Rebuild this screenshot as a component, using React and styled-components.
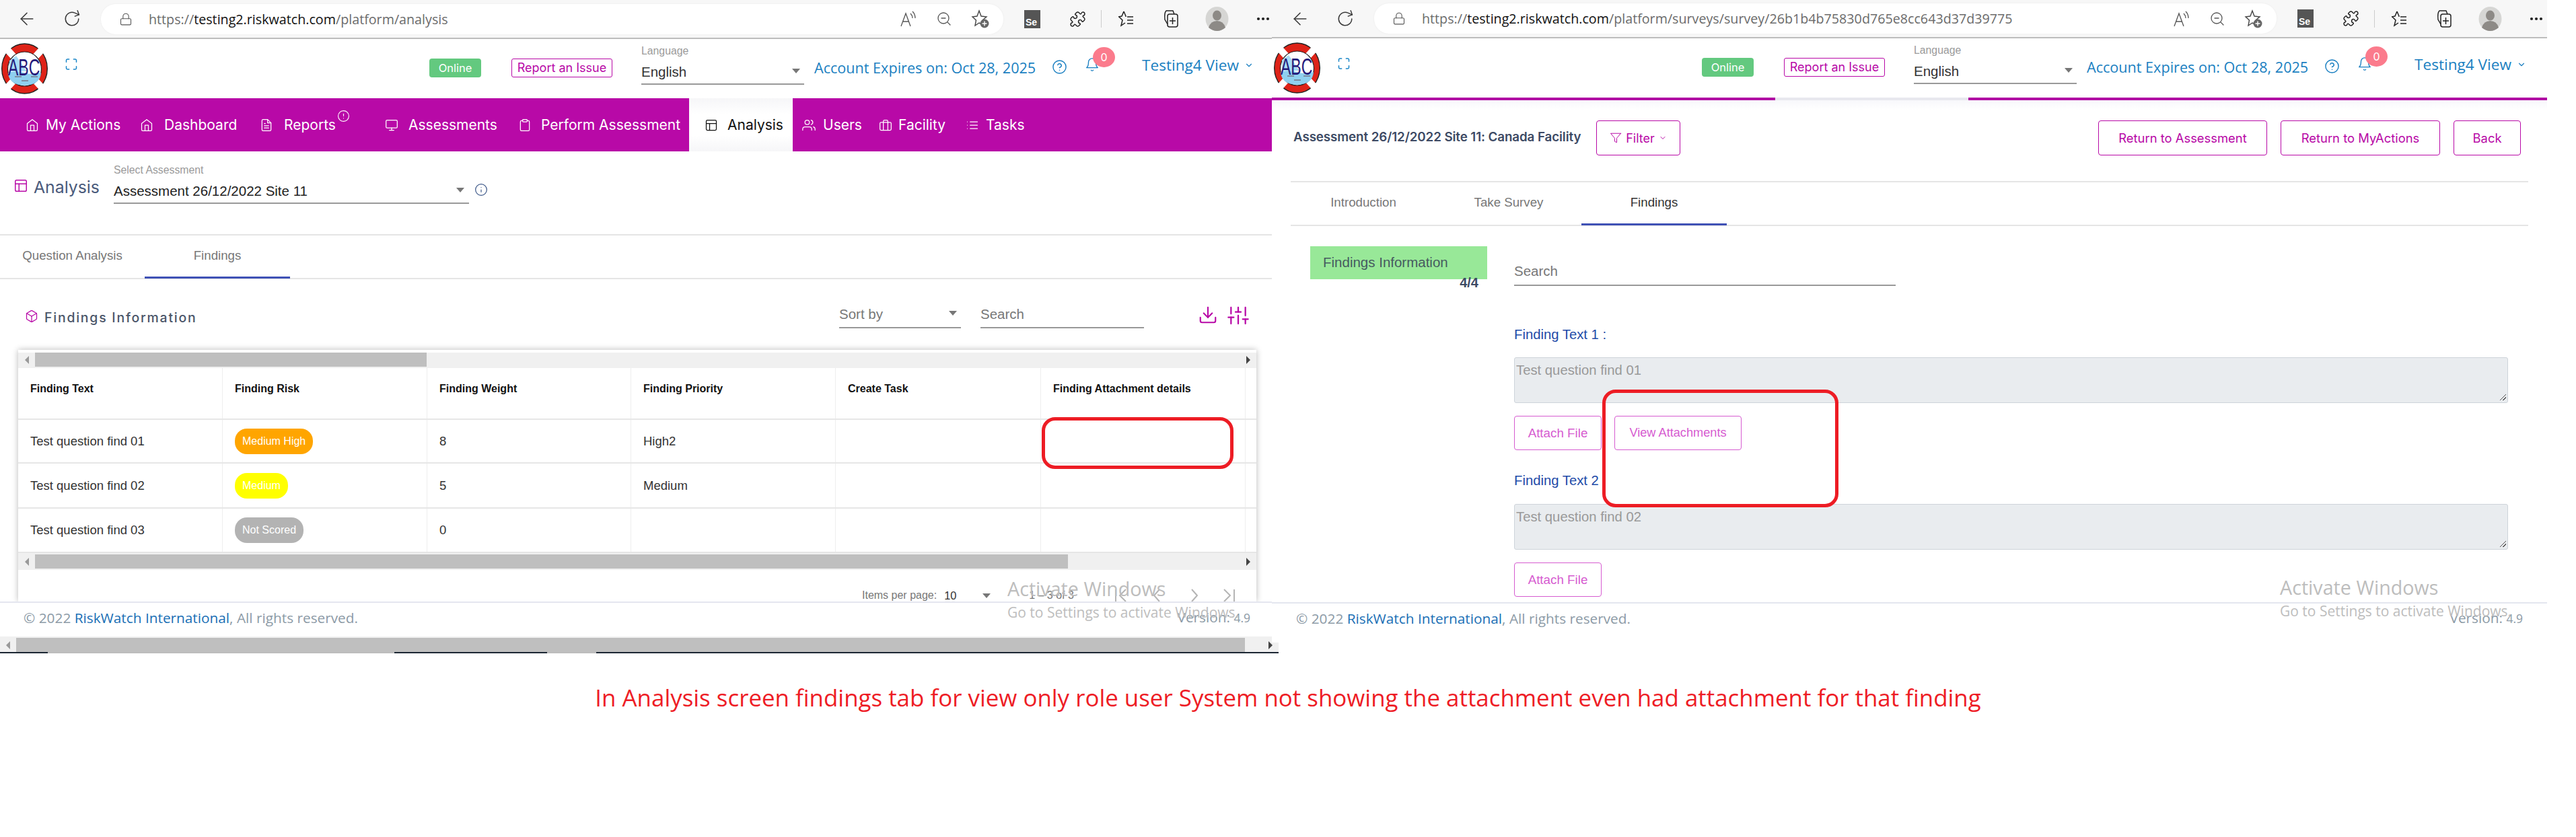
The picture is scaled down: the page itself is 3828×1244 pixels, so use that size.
import React from "react";
import styled, { createGlobalStyle } from "styled-components";
import {
  FiHome, FiFileText, FiMonitor, FiClipboard, FiLayout, FiUsers, FiBriefcase, FiList, FiBox, FiFilter,
  FiChevronDown, FiDownload, FiSliders, FiBell, FiHelpCircle, FiInfo, FiMaximize, FiAlertCircle,
  FiArrowLeft, FiRotateCw, FiLock, FiZoomOut, FiMoreHorizontal,
} from "react-icons/fi";
import { Puzzle } from "lucide-react";

const Global = createGlobalStyle`
  html, body { margin: 0; padding: 0; background: #fff; }
  body { font-family: "Inter", "Liberation Sans", sans-serif; overflow: hidden; }
  * { box-sizing: border-box; }
`;

const MAGENTA = "#b809a7";
const SANS = `"Liberation Sans", Arial, sans-serif`;
const OPEN = `"Open Sans", "Liberation Sans", sans-serif`;

const Page = styled.div`
  width: 3828px;
  height: 1244px;
  display: flex;
  flex-direction: column;
  overflow: hidden;
  background: #fff;
`;
const Panels = styled.div`
  display: flex;
  height: 1010px;
`;
const Panel = styled.div`
  position: relative;
  flex: none;
  width: ${(p) => p.$w}px;
  display: flex;
  flex-direction: column;
`;
const Caption = styled.div`
  height: 54px;
  line-height: 54px;
  text-align: center;
  font-family: ${OPEN};
  font-size: 34.9px;
  color: #ee1c25;
  white-space: nowrap;
`;

/* browser chrome */
const Bar = styled.div`
  flex: none;
  height: ${(p) => p.$h + 2}px;
  background: #f7f7f7;
  border-bottom: 2px solid #bdbdbd;
  display: flex;
  align-items: center;
  padding-left: ${(p) => p.$pad}px;
  color: #333;
`;
const BarIcon = styled.span`
  flex: none;
  display: flex;
  align-items: center;
  justify-content: center;
  width: ${(p) => p.$w}px;
  margin-left: ${(p) => p.$ml || 0}px;
  color: ${(p) => p.$c || "#3a3a3a"};
`;
const Pill = styled.div`
  flex: none;
  margin-left: 28px;
  width: 1341px;
  height: 45px;
  border-radius: 22px;
  background: #fff;
  display: flex;
  align-items: center;
  padding-left: 27px;
  box-shadow: 0 0 3px rgba(0, 0, 0, 0.05);
`;
const Url = styled.div`
  flex: none;
  font-family: ${OPEN};
  font-size: 19.7px;
  color: #6b6b6b;
  width: 1115px;
  margin-left: 24px;
  white-space: nowrap;
  b { font-weight: 400; color: #111; }
`;
const Se = styled.div`
  flex: none;
  margin-left: 31px;
  width: 24px;
  height: 27px;
  background: #555;
  color: #fff;
  font: 700 14px/1 ${SANS};
  padding: 11px 0 0 2px;
`;
const Sep = styled.div`
  flex: none;
  width: 1px;
  height: 26px;
  background: #ccc;
  margin-left: 22px;
`;

const ReadAloud = () => (
  <svg width="26" height="26" viewBox="0 0 26 26" fill="none" stroke="#555" strokeWidth="1.3">
    <path d="M3 24 L10 5 L17 24 M5.500 17 H14.500" />
    <path d="M17 5 Q20 8 20 12 M20 2 Q24 6 24 12" />
  </svg>
);
const StarPlus = () => (
  <svg width="30" height="30" viewBox="0 0 30 30" fill="none" stroke="#444" strokeWidth="1.4">
    <path d="M13 3 L16 11 L24 12 L18 17 L19 24 L13 21 L7 25 L8.500 17 L3 12 L10 11 Z" />
    <circle cx="21" cy="22" r="6.500" fill="#666" stroke="none" />
    <path d="M21 18.500 V25.500 M17.500 22 H24.500" stroke="#fff" />
  </svg>
);
const FavLines = () => (
  <svg width="28" height="28" viewBox="0 0 28 28" fill="none" stroke="#222" strokeWidth="1.5">
    <path d="M11 3 L14 10 L13 10 M4 11 L9 16 L7 24 L13 20" />
    <path d="M11 3 L8 10 L3 11" />
    <path d="M16 11 H25 M16 16 H25 M16 21 H25" />
  </svg>
);
const Collections = () => (
  <svg width="28" height="30" viewBox="0 0 28 30" fill="none" stroke="#222" strokeWidth="1.5">
    <rect x="9" y="8" width="15" height="19" rx="3" />
    <path d="M9 23 L5 16 Q4 6 7 3 H17 L19 8" />
    <path d="M16.500 13 V23 M12 18 H21" />
  </svg>
);
const Avatar = () => (
  <svg width="35" height="36" viewBox="0 0 35 36">
    <ellipse cx="17.500" cy="18" rx="17" ry="18" fill="#d6d6d4" />
    <ellipse cx="17.500" cy="13" rx="6.500" ry="7.500" fill="#8d8a86" />
    <path d="M5 31 Q8 21 17.500 21 Q27 21 30 31 Q24 36 17.500 36 Q11 36 5 31Z" fill="#8d8a86" />
  </svg>
);

const BrowserBar = ({ h, pad, domainPath }) => (
  <Bar $h={h} $pad={pad}>
    <BarIcon $w={32} $ml={24}><FiArrowLeft size={30} strokeWidth={1.3} /></BarIcon>
    <BarIcon $w={30} $ml={36}><FiRotateCw size={26} strokeWidth={1.4} style={{ transform: "rotate(-20deg)" }} /></BarIcon>
    <Pill>
      <BarIcon $w={20} $c="#555"><FiLock size={21} strokeWidth={1.3} /></BarIcon>
      <Url>https://<b>testing2.riskwatch.com</b>/{domainPath}</Url>
      <BarIcon $w={26}><ReadAloud /></BarIcon>
      <BarIcon $w={26} $ml={28} $c="#555"><FiZoomOut size={24} strokeWidth={1.3} /></BarIcon>
      <BarIcon $w={30} $ml={26}><StarPlus /></BarIcon>
    </Pill>
    <Se>Se</Se>
    <BarIcon $w={26} $ml={42} $c="#222"><Puzzle size={25} strokeWidth={1.4} /></BarIcon>
    <Sep />
    <BarIcon $w={28} $ml={22}><FavLines /></BarIcon>
    <BarIcon $w={28} $ml={39}><Collections /></BarIcon>
    <BarIcon $w={35} $ml={37}><Avatar /></BarIcon>
    <BarIcon $w={26} $ml={38} $c="#222"><FiMoreHorizontal size={24} strokeWidth={2.2} /></BarIcon>
  </Bar>
);

/* app header */
const Head = styled.div`
  flex: none;
  height: 88px;
  background: #fff;
  display: flex;
  align-items: flex-start;
  padding-left: ${(p) => p.$pad}px;
`;
const LogoBox = styled.div`
  flex: none;
  width: 69px;
  height: 76px;
  margin-top: 6px;
`;
const Fullscreen = styled.div`
  flex: none;
  margin: 27px 0 0 25px;
  width: 20px;
  color: #1a86c8;
  display: flex;
`;
const Online = styled.div`
  flex: none;
  margin: 29px 0 0 522px;
  width: 77px;
  height: 28px;
  border-radius: 4px;
  background: #63c97f;
  color: #fff;
  font-size: 16.5px;
  line-height: 28px;
  text-align: center;
`;
const Report = styled.div`
  flex: none;
  margin: 29px 0 0 45px;
  width: 150px;
  height: 28px;
  border: 1px solid ${MAGENTA};
  border-radius: 3px;
  color: ${MAGENTA};
  font-size: 18px;
  line-height: 26px;
  text-align: center;
  white-space: nowrap;
`;
const Lang = styled.div`
  flex: none;
  position: relative;
  margin: 8px 0 0 43px;
  width: 242px;
  height: 60px;
  border-bottom: 2px solid #999;
`;
const LangLabel = styled.div`
  color: #9a9a9a;
  font: 15.8px/20px ${SANS};
`;
const LangValue = styled.div`
  margin-top: 9px;
  color: #333;
  font: 20.5px/24px ${SANS};
`;
const Caret = styled.div`
  position: absolute;
  right: ${(p) => p.$r}px;
  top: ${(p) => p.$t}px;
  width: 0;
  height: 0;
  border-left: 6px solid transparent;
  border-right: 6px solid transparent;
  border-top: 7px solid #777;
`;
const Expires = styled.div`
  flex: none;
  margin: 29px 0 0 15px;
  width: 337px;
  color: #1a7fc1;
  font-family: ${OPEN};
  font-size: 21.6px;
  line-height: 28px;
  white-space: nowrap;
`;
const BlueIcon = styled.div`
  flex: none;
  position: relative;
  display: flex;
  color: #1a7fc1;
  margin: ${(p) => p.$t}px 0 0 ${(p) => p.$l}px;
`;
const Badge = styled.div`
  position: absolute;
  left: 12px;
  top: -15px;
  width: 33px;
  height: 30px;
  border-radius: 50%;
  background: #fb7b8c;
  color: #fff;
  font-size: 16px;
  line-height: 30px;
  text-align: center;
`;
const UserName = styled.div`
  flex: none;
  margin: 25px 0 0 63px;
  width: 176px;
  display: flex;
  align-items: center;
  gap: 8px;
  color: #1a7fc1;
  font-family: ${OPEN};
  font-size: 22.6px;
  line-height: 28px;
  white-space: nowrap;
`;

const Logo = () => (
  <svg width="69" height="76" viewBox="0 0 69 76">
    <ellipse cx="34.500" cy="38" rx="33.800" ry="37" fill="#de2318" stroke="#222" strokeWidth="1.4" />
    <g stroke="#fff" strokeWidth="10">
      <path d="M9 10 L20 22" />
      <path d="M60 10 L49 22" />
      <path d="M9 66 L20 54" />
      <path d="M60 66 L49 54" />
    </g>
    <ellipse cx="34.500" cy="38.500" rx="25" ry="25.500" fill="#fff" stroke="#222" strokeWidth="1.2" />
    <path d="M10 44 Q22 40 34 44 T59 44 Q58 62 34.500 63 Q11 62 10 44Z" fill="#8fd0ef" />
    <path d="M12 26 L22 19 L38 42 L12 42Z" fill="#a8dcf5" />
    <text transform="translate(10 48) scale(1 1.55)" fontFamily="Liberation Sans, sans-serif" fontSize="23" fill="#241a7a">ABC</text>
    <path d="M20 50 H30 M44 50 H54 M30 56 H40" stroke="#778" strokeWidth="1.500" />
  </svg>
);

const AppHead = ({ pad }) => (
  <Head $pad={pad}>
    <LogoBox><Logo /></LogoBox>
    <Fullscreen><FiMaximize size={21} strokeWidth={1.8} /></Fullscreen>
    <Online>Online</Online>
    <Report>Report an Issue</Report>
    <Lang>
      <LangLabel>Language</LangLabel>
      <LangValue>English</LangValue>
      <Caret $r={6} $t={36} />
    </Lang>
    <Expires>Account Expires on: Oct 28, 2025</Expires>
    <BlueIcon $t={30} $l={16}><FiHelpCircle size={23} strokeWidth={1.5} /></BlueIcon>
    <BlueIcon $t={27} $l={26}>
      <FiBell size={22} strokeWidth={1.5} />
      <Badge>0</Badge>
    </BlueIcon>
    <UserName>
      Testing4 View <FiChevronDown size={14} />
    </UserName>
  </Head>
);

/* nav */
const Nav = styled.nav`
  flex: none;
  height: 79px;
  background: ${MAGENTA};
  display: flex;
  padding-left: 38px;
`;
const NavItem = styled.div`
  flex: none;
  position: relative;
  width: ${(p) => p.$w}px;
  display: flex;
  align-items: center;
  gap: ${(p) => p.$gap}px;
  padding-left: ${(p) => p.$pl || 0}px;
  color: ${(p) => (p.$active ? "#111" : "#fff")};
  background: ${(p) => (p.$active ? "linear-gradient(#f6f6f8, #fff 30%, #fff 70%, #f6f6f8)" : "none")};
  font-size: 21px;
  white-space: nowrap;
`;
const Superscript = styled.span`
  position: absolute;
  left: 115px;
  top: 17px;
  display: flex;
`;

const NAV = [
  [FiHome, "My Actions", 170, 10],
  [FiHome, "Dashboard", 178, 16],
  [FiFileText, "Reports", 186, 16, 0, true],
  [FiMonitor, "Assessments", 198, 15],
  [FiClipboard, "Perform Assessment", 254, 14],
  [FiLayout, "Analysis", 154, 14, 23],
  [FiUsers, "Users", 128, 11, 14],
  [FiBriefcase, "Facility", 129, 9],
  [FiList, "Tasks", 120, 10],
];

/* analysis head */
const AnalysisHead = styled.div`
  flex: none;
  height: 123px;
  display: flex;
  align-items: flex-start;
  padding-left: 20px;
`;
const PageIcon = styled.div`
  flex: none;
  margin-top: 40px;
  color: ${MAGENTA};
  display: flex;
`;
const PageTitle = styled.div`
  flex: none;
  margin: 38px 0 0 8px;
  width: 119px;
  color: #4a5a7b;
  font-size: 24.8px;
  line-height: 30px;
`;
const SelectField = styled.div`
  flex: none;
  position: relative;
  width: 528px;
  height: 60px;
  margin-top: 18px;
  border-bottom: 2px solid #999;
`;
const SelectLabel = styled.div`
  color: #9a9a9a;
  font: 15.8px/20px ${SANS};
`;
const SelectValue = styled.div`
  margin-top: 9px;
  color: #222;
  font: 20.5px/24px ${SANS};
`;
const InfoIcon = styled.div`
  flex: none;
  margin: 47px 0 0 8px;
  color: #3f5a8a;
  display: flex;
`;
const Rule = styled.div`
  flex: none;
  height: 2px;
  background: #e5e5e5;
  margin: 0 ${(p) => p.$mr || 0}px 0 ${(p) => p.$ml || 0}px;
`;
const TabRow = styled.div`
  flex: none;
  height: 65px;
  display: flex;
  margin: 0 ${(p) => p.$mr || 0}px 0 ${(p) => p.$ml || 0}px;
  border-bottom: 2px solid #e5e5e5;
`;
const Tab = styled.div`
  flex: none;
  width: ${(p) => p.$w}px;
  height: 64px;
  padding-bottom: 1px;
  display: flex;
  align-items: center;
  justify-content: center;
  color: ${(p) => p.$c};
  font: 18.7px ${SANS};
  border-bottom: 3px solid ${(p) => (p.$active ? "#3f51b5" : "transparent")};
`;

/* section */
const SectionHead = styled.div`
  flex: none;
  height: 105px;
  position: relative;
  display: flex;
  align-items: flex-start;
  padding-left: 37px;
`;
const SectionIcon = styled.div`
  flex: none;
  margin-top: 45px;
  color: ${MAGENTA};
  display: flex;
`;
const SectionTitle = styled.div`
  flex: none;
  margin: 43px 0 0 9px;
  width: 1181px;
  color: #4a5568;
  font-size: 19.4px;
  font-weight: 500;
  letter-spacing: 1.8px;
  line-height: 28px;
  white-space: nowrap;
`;
const Field = styled.div`
  flex: none;
  position: relative;
  width: ${(p) => p.$w}px;
  height: ${(p) => p.$h || 40}px;
  margin: ${(p) => p.$t}px 0 0 ${(p) => p.$l}px;
  border-bottom: 2px solid #999;
  color: #777;
  font: 20.5px/38px ${SANS};
`;
const MagentaIcon = styled.div`
  flex: none;
  display: flex;
  margin: 38px 0 0 ${(p) => p.$l}px;
  color: ${MAGENTA};
`;

/* table */
const Card = styled.div`
  flex: none;
  margin-left: 27px;
  width: 1840px;
  height: 374px;
  padding-top: 4px;
  background: #fff;
  box-shadow: 0 0 9px rgba(0, 0, 0, 0.28);
  display: flex;
  flex-direction: column;
`;
const Scroll = styled.div`
  flex: none;
  height: ${(p) => p.$h || 23}px;
  background: #f0f0f0;
  display: flex;
  align-items: flex-start;
  padding-top: ${(p) => p.$top || 0}px;
`;
const ScrollEnd = styled.div`
  flex: none;
  width: ${(p) => p.$w}px;
  height: 21px;
  display: flex;
  align-items: center;
  justify-content: center;
  &::before {
    content: "";
    border-top: 6px solid transparent;
    border-bottom: 6px solid transparent;
    ${(p) => (p.$right ? "border-left: 6px solid #444;" : "border-right: 6px solid #999;")}
  }
`;
const Thumb = styled.div`
  flex: none;
  width: ${(p) => p.$w}px;
  height: 21px;
  background: #bfbfbf;
`;
const Spring = styled.div`
  flex: 1;
`;
const Row = styled.div`
  flex: none;
  display: grid;
  grid-template-columns: 304px 304px 303px 304px 305px 304px 16px;
  height: ${(p) => p.$h}px;
  border-bottom: 2px solid #e6e6e6;
`;
const Cell = styled.div`
  border-right: ${(p) => (p.$last ? 0 : "1px solid #eee")};
  padding-left: 18px;
  display: flex;
  align-items: ${(p) => (p.$head ? "flex-start" : "center")};
  padding-top: ${(p) => (p.$head ? 19 : 0)}px;
  font: ${(p) => (p.$head ? "700 16px/24px" : "400 18.5px/24px")} ${SANS};
  color: ${(p) => (p.$head ? "#111" : "#333")};
  white-space: nowrap;
`;
const RiskPill = styled.div`
  height: 38px;
  padding: 0 11px;
  border-radius: 18px;
  background: ${(p) => p.$bg};
  color: #fff;
  font: 16px/38px ${SANS};
`;
const Pager = styled.div`
  flex: 1;
  position: relative;
  display: flex;
  align-items: flex-start;
  padding: 28px 0 0 1254px;
  font: 16px/20px ${SANS};
  color: #777;
  white-space: nowrap;
`;
const PagerValue = styled.div`
  margin-left: 11px;
  width: 57px;
  color: #333;
  font-size: 16.4px;
`;
const PagerCaret = styled.div`
  flex: none;
  margin-top: 7px;
  width: 0;
  height: 0;
  border-left: 6px solid transparent;
  border-right: 6px solid transparent;
  border-top: 7px solid #777;
`;
const PagerRange = styled.div`
  flex: none;
  margin-left: 57px;
  width: 124px;
`;
const PagerIcon = styled.div`
  flex: none;
  width: ${(p) => p.$w}px;
  display: flex;
  margin-top: -2px;
`;
const PageGlyph = ({ d }) => (
  <svg width="26" height="24" viewBox="0 0 26 24" fill="none" stroke="#b5b5b5" strokeWidth="2">
    <path d={d} />
  </svg>
);

/* footer */
const Foot = styled.div`
  flex: none;
  position: relative;
  height: ${(p) => p.$h}px;
  background: #fff;
  border-top: 2px solid #e4e6ef;
  display: flex;
  align-items: flex-start;
  justify-content: space-between;
  padding: 7px ${(p) => p.$pr}px 0 ${(p) => p.$pl}px;
  font: 20.8px/30px ${OPEN};
  color: #8c9aa6;
  white-space: nowrap;
`;
const FootLink = styled.span`
  color: #1a6fb5;
`;
const Version = styled.div`
  margin-top: -1px;
`;
const Small = styled.span`
  font-size: 17.5px;
`;
const BottomBar = styled.div`
  flex: none;
  position: relative;
  width: 1900px;
  &::before {
    content: "";
    position: absolute;
    right: 0;
    top: -11px;
    width: 5px;
    height: 11px;
    background: #f0f0f0;
  }
`;
const BottomLine = styled.div`
  height: 2px;
  background: linear-gradient(
    to right,
    #1c2733 0 71px,
    #bcbcbc 71px 586px,
    #1c2733 586px 813px,
    #bcbcbc 813px 886px,
    #1c2733 886px
  );
`;
const Watermark = styled.div`
  position: absolute;
  left: ${(p) => p.$x}px;
  top: ${(p) => p.$y}px;
  color: #bdbdbd;
  font-family: ${OPEN};
  pointer-events: none;
  white-space: nowrap;
`;
const WmTitle = styled.div`
  font-size: 28.7px;
  line-height: 36px;
`;
const WmSub = styled.div`
  font-size: 21px;
  line-height: 26px;
  margin-top: 4px;
`;
const Annotation = styled.div`
  position: absolute;
  left: ${(p) => p.$x}px;
  top: ${(p) => p.$y}px;
  width: ${(p) => p.$w}px;
  height: ${(p) => p.$h}px;
  border: 5px solid #ed1c24;
  border-radius: 20px;
  pointer-events: none;
`;

/* right */
const Strip = styled.div`
  flex: none;
  height: 4px;
  background: linear-gradient(to right, #b00ca3 0 748px, #e8e8ee 748px 1035px, #b00ca3 1035px);
`;
const TitleRow = styled.div`
  flex: none;
  height: 120px;
  display: flex;
  align-items: flex-start;
  padding: 30px 39px 0 32px;
  background: linear-gradient(#f8f8fb, #fff 14px);
`;
const SurveyTitle = styled.div`
  flex: none;
  width: 450px;
  height: 52px;
  line-height: 50px;
  color: #3d4a64;
  font-size: 18.8px;
  font-weight: 600;
  letter-spacing: -0.1px;
  white-space: nowrap;
`;
const OutlineBtn = styled.div`
  flex: none;
  width: ${(p) => p.$w}px;
  height: ${(p) => p.$h || 52}px;
  margin-left: ${(p) => p.$ml || 0}px;
  border: 1px solid ${(p) => p.$c || MAGENTA};
  border-radius: 4px;
  color: ${(p) => p.$c || MAGENTA};
  display: flex;
  align-items: center;
  justify-content: center;
  gap: 6px;
  font-size: ${(p) => p.$fs || 18.4}px;
  white-space: nowrap;
  font-family: ${(p) => p.$font || "inherit"};
`;
const Body = styled.div`
  flex: none;
  height: 559px;
  display: flex;
  align-items: flex-start;
  padding: 30px 58px 0 57px;
`;
const SideCol = styled.div`
  flex: none;
  width: 263px;
  margin-right: 40px;
`;
const SideTab = styled.div`
  height: 49px;
  background: #98e898;
  color: #465a60;
  font: 20.5px/48px ${SANS};
  padding-left: 19px;
  white-space: nowrap;
`;
const SideCount = styled.div`
  text-align: right;
  padding-right: 13px;
  color: #3d4a64;
  font: 700 20px/10px ${SANS};
`;
const MainCol = styled.div`
  flex: 1;
  display: flex;
  flex-direction: column;
`;
const QLabel = styled.div`
  color: #1e4ba8;
  font: 20.3px/24px ${SANS};
  white-space: nowrap;
  margin-top: ${(p) => p.$t}px;
`;
const Area = styled.div`
  position: relative;
  height: 68px;
  margin-top: ${(p) => p.$t}px;
  background: #e9ecef;
  border: 1px solid #ced4da;
  border-radius: 3px;
  padding: 6px 2px;
  color: #999;
  font: 20.3px/24px ${SANS};
  &::after {
    content: "";
    position: absolute;
    right: 2px;
    bottom: 3px;
    width: 9px;
    height: 9px;
    background: linear-gradient(135deg, transparent 45%, #555 45% 55%, transparent 55% 70%, #555 70% 80%, transparent 80%);
  }
`;
const BtnRow = styled.div`
  display: flex;
  gap: 19px;
  margin-top: 19px;
`;

export default function App() {
  return (
    <Page>
      <Global />
      <Panels>
        <Panel $w={1890}>
          <BrowserBar h={56} pad={0} domainPath="platform/analysis" />
          <AppHead pad={2} />
          <Nav>
            {NAV.map(([Icon, label, w, gap, pl, sup], i) => (
              <NavItem key={label + i} $w={w} $gap={gap} $pl={pl} $active={label === "Analysis"}>
                <Icon size={20} strokeWidth={1.5} />
                {label}
                {sup && <Superscript><FiAlertCircle size={19} strokeWidth={1.4} /></Superscript>}
              </NavItem>
            ))}
          </Nav>
          <AnalysisHead>
            <PageIcon><FiLayout size={22} strokeWidth={1.6} /></PageIcon>
            <PageTitle>Analysis</PageTitle>
            <SelectField>
              <SelectLabel>Select Assessment</SelectLabel>
              <SelectValue>Assessment 26/12/2022 Site 11</SelectValue>
              <Caret $r={7} $t={36} />
            </SelectField>
            <InfoIcon><FiInfo size={20} strokeWidth={1.5} /></InfoIcon>
          </AnalysisHead>
          <Rule />
          <TabRow>
            <Tab $w={215} $c="#777">Question Analysis</Tab>
            <Tab $w={216} $c="#777" $active>Findings</Tab>
          </TabRow>
          <SectionHead>
            <SectionIcon><FiBox size={20} strokeWidth={1.5} /></SectionIcon>
            <SectionTitle>Findings Information</SectionTitle>
            <Field $w={181} $l={0} $t={33}>
              Sort by
              <Caret $r={6} $t={14} />
            </Field>
            <Field $w={243} $l={29} $t={33}>Search</Field>
            <MagentaIcon $l={80}><FiDownload size={30} strokeWidth={1.7} /></MagentaIcon>
            <MagentaIcon $l={14}><FiSliders size={32} strokeWidth={1.7} /></MagentaIcon>
          </SectionHead>
          <Card>
            <Scroll>
              <ScrollEnd $w={25} />
              <Thumb $w={582} />
              <Spring />
              <ScrollEnd $w={24} $right />
            </Scroll>
            <Row $h={77}>
              {["Finding Text", "Finding Risk", "Finding Weight", "Finding Priority", "Create Task", "Finding Attachment details"].map((t) => (
                <Cell key={t} $head>{t}</Cell>
              ))}
              <Cell $last />
            </Row>
            <Row $h={65}>
              <Cell>Test question find 01</Cell>
              <Cell><RiskPill $bg="#ffa500">Medium High</RiskPill></Cell>
              <Cell>8</Cell>
              <Cell>High2</Cell>
              <Cell />
              <Cell />
              <Cell $last />
            </Row>
            <Row $h={67}>
              <Cell>Test question find 02</Cell>
              <Cell><RiskPill $bg="#ffff00">Medium</RiskPill></Cell>
              <Cell>5</Cell>
              <Cell>Medium</Cell>
              <Cell />
              <Cell />
              <Cell $last />
            </Row>
            <Row $h={66}>
              <Cell>Test question find 03</Cell>
              <Cell><RiskPill $bg="#b3b3b3">Not Scored</RiskPill></Cell>
              <Cell>0</Cell>
              <Cell />
              <Cell />
              <Cell />
              <Cell $last />
            </Row>
            <Scroll $h={25} $top={2}>
              <ScrollEnd $w={25} />
              <Thumb $w={1535} />
              <Spring />
              <ScrollEnd $w={24} $right />
            </Scroll>
            <Pager>
              Items per page:
              <PagerValue>10</PagerValue>
              <PagerCaret />
              <PagerRange>1 – 3 of 3</PagerRange>
              <PagerIcon $w={54}><PageGlyph d="M5 3 V21 M20 3 L11 12 L20 21" /></PagerIcon>
              <PagerIcon $w={54}><PageGlyph d="M16 3 L8 12 L16 21" /></PagerIcon>
              <PagerIcon $w={52}><PageGlyph d="M10 3 L18 12 L10 21" /></PagerIcon>
              <PagerIcon $w={26}><PageGlyph d="M6 3 L15 12 L6 21 M21 3 V21" /></PagerIcon>
            </Pager>
          </Card>
          <Foot $h={52} $pl={35} $pr={32}>
            <div>© 2022 <FootLink>RiskWatch International</FootLink>, All rights reserved.</div>
            <Version>Version: <Small>4.9</Small></Version>
          </Foot>
          <BottomBar>
            <Scroll $h={23} $top={2}>
              <ScrollEnd $w={24} />
              <Thumb $w={1826} />
              <Spring />
              <ScrollEnd $w={24} $right />
            </Scroll>
            <BottomLine />
          </BottomBar>
          <Watermark $x={1497} $y={857}>
            <WmTitle>Activate Windows</WmTitle>
            <WmSub>Go to Settings to activate Windows.</WmSub>
          </Watermark>
          <Annotation $x={1548} $y={620} $w={285} $h={77} />
        </Panel>

        <Panel $w={1895}>
          <BrowserBar h={55} pad={2} domainPath="platform/surveys/survey/26b1b4b75830d765e8cc643d37d39775" />
          <AppHead pad={3} />
          <Strip />
          <TitleRow>
            <SurveyTitle>Assessment 26/12/2022 Site 11: Canada Facility</SurveyTitle>
            <OutlineBtn $w={125} $fs={18}>
              <FiFilter size={18} strokeWidth={1.3} />
              Filter
              <FiChevronDown size={12} />
            </OutlineBtn>
            <Spring />
            <OutlineBtn $w={251}>Return to Assessment</OutlineBtn>
            <OutlineBtn $w={237} $ml={20}>Return to MyActions</OutlineBtn>
            <OutlineBtn $w={100} $ml={20}>Back</OutlineBtn>
          </TitleRow>
          <Rule $ml={28} $mr={28} />
          <TabRow $ml={28} $mr={28}>
            <Tab $w={216} $c="#777">Introduction</Tab>
            <Tab $w={216} $c="#777">Take Survey</Tab>
            <Tab $w={216} $c="#333" $active>Findings</Tab>
          </TabRow>
          <Body>
            <SideCol>
              <SideTab>Findings Information</SideTab>
              <SideCount>4/4</SideCount>
            </SideCol>
            <MainCol>
              <Field $w={567} $l={0} $t={18} $h={41}>Search</Field>
              <QLabel $t={60}>Finding Text 1 :</QLabel>
              <Area $t={22}>Test question find 01</Area>
              <BtnRow>
                <OutlineBtn $w={130} $h={51} $c="#d65bd0" $fs={18.8} $font={SANS}>Attach File</OutlineBtn>
                <OutlineBtn $w={189} $h={51} $c="#d65bd0" $fs={18.2} $font={SANS}>View Attachments</OutlineBtn>
              </BtnRow>
              <QLabel $t={33}>Finding Text 2 :</QLabel>
              <Area $t={23}>Test question find 02</Area>
              <BtnRow>
                <OutlineBtn $w={130} $h={51} $c="#d65bd0" $fs={18.8} $font={SANS}>Attach File</OutlineBtn>
              </BtnRow>
            </MainCol>
          </Body>
          <Foot $h={60} $pl={36} $pr={36}>
            <div>© 2022 <FootLink>RiskWatch International</FootLink>, All rights reserved.</div>
            <Version>Version: <Small>4.9</Small></Version>
          </Foot>
          <Watermark $x={1498} $y={855}>
            <WmTitle>Activate Windows</WmTitle>
            <WmSub>Go to Settings to activate Windows.</WmSub>
          </Watermark>
          <Annotation $x={491} $y={579} $w={351} $h={175} />
        </Panel>
      </Panels>
      <Caption>In Analysis screen findings tab for view only role user System not showing the attachment even had attachment for that finding</Caption>
    </Page>
  );
}
